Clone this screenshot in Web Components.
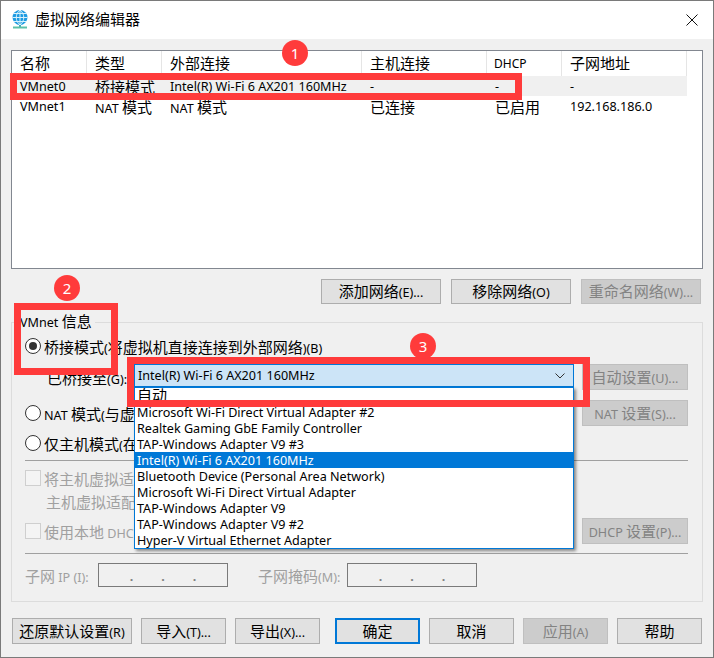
<!DOCTYPE html>
<html>
<head>
<meta charset="utf-8">
<style>
  html, body { margin: 0; padding: 0; background: #f0f0f0; }
  body { font: 12.6px "Noto Sans", "Noto Sans CJK SC", sans-serif; color: #000; }
</style>
</head>
<body>
<vm-dialog></vm-dialog>
<script>
// latin text is small and cjk text is big in this dialog, so the cjk runs get their own span
const mix = s => s.replace(/[\u3000-\u9fff]+/g, '<span class="z">$&</span>');
const textCss = `
  .z { font-family: "Noto Sans CJK SC", sans-serif; font-size: 15px; }
`;

class TitleBar extends HTMLElement {
  constructor() {
    super();
    this.attachShadow({ mode: "open" });
    this.shadowRoot.innerHTML = `
      <style>
        :host { display: flex; align-items: center; height: 38px; background: #fff; padding: 0 15px 0 10px; }
        svg { display: block; }
        .name { margin-left: 6px; padding-bottom: 4px; font: 15px "Noto Sans CJK SC", sans-serif; flex: 1; }
      </style>
      <svg width="18" height="20" viewBox="0 0 18 20">
        <path d="M9 14v3" stroke="#3fa9b8" stroke-width="2" fill="none"/>
        <path d="M2 17.500h14" stroke="#5cc0a8" stroke-width="2" fill="none"/>
        <circle cx="9" cy="7.500" r="7.500" fill="#1e9be2"/>
        <path d="M9 0v15M1.500 7.500h15M3 3.500h12M3 11.500h12M9 0c-5 4-5 11 0 15M9 0c5 4 5 11 0 15" stroke="#d8f1fb" stroke-width="1" fill="none"/>
      </svg>
      <span class="name"><slot></slot></span>
      <svg width="12" height="12" viewBox="0 0 12 12">
        <path d="M.5.500l11 11M11.500.500l-11 11" stroke="#111" stroke-width="1" fill="none"/>
      </svg>
    `;
  }
}

class NetTable extends HTMLElement {
  constructor() {
    super();
    this.attachShadow({ mode: "open" });
    const head = ["名称", "类型", "外部连接", "主机连接", "DHCP", "子网地址"];
    const rows = [
      ["VMnet0", "桥接模式", "Intel(R) Wi-Fi 6 AX201 160MHz", "-", "-", "-"],
      ["VMnet1", "NAT 模式", "NAT 模式", "已连接", "已启用", "192.168.186.0"],
    ];
    const cells = r => r.map(c => `<div class="c">${mix(c)}</div>`).join("");
    this.shadowRoot.innerHTML = `
      <style>
        ${textCss}
        :host { display: block; height: 219px; box-sizing: border-box; border: 1px solid #828790; background: #fff; }
        .r { display: grid; grid-template-columns: 75px 75px 200px 125px 75px 125px; width: 675px; height: 20px; align-items: center; }
        .c { padding-left: 8px; white-space: nowrap; overflow: hidden; }
        .h { height: 25px; }
        .h .c { height: 25px; line-height: 23px; box-sizing: border-box; border-right: 1px solid #e5e5e5; padding-left: 8px; }
        .h .c:nth-child(5) { font-size: 12px; line-height: 25px; padding-left: 7px; }
        .on { background: #f0f0f0; }
      </style>
      <div class="r h">${cells(head)}</div>
      <div class="r on">${cells(rows[0])}</div>
      <div class="r">${cells(rows[1])}</div>
    `;
  }
}

class WinButton extends HTMLElement {
  constructor() {
    super();
    this.attachShadow({ mode: "open" });
  }
  connectedCallback() {
    const label = this.textContent;
    this.shadowRoot.innerHTML = `
      <style>
        ${textCss}
        :host { display: flex; align-items: center; justify-content: center; box-sizing: border-box;
          height: 26px; padding-bottom: 2px; background: #e1e1e1; border: 1px solid #adadad; white-space: nowrap; flex: none; }
        :host([off]) { background: #cccccc; border-color: #bfbfbf; color: #838383; }
        :host([main]) { border: 2px solid #0078d7; }
      </style>
      <span>${mix(label)}</span>
    `;
  }
}

class RadioOpt extends HTMLElement {
  constructor() {
    super();
    this.attachShadow({ mode: "open" });
  }
  connectedCallback() {
    const label = this.textContent;
    this.shadowRoot.innerHTML = `
      <style>
        ${textCss}
        :host { display: flex; align-items: center; height: 20px; white-space: nowrap; }
        .o { width: 16px; height: 16px; box-sizing: border-box; border: 1px solid #333; border-radius: 50%; background: #fff;
          display: flex; align-items: center; justify-content: center; margin-right: 3px; flex: none; }
        :host([on]) .o::after { content: ""; width: 8px; height: 8px; border-radius: 50%; background: #333; }
      </style>
      <span class="o"></span><span>${mix(label)}</span>
    `;
  }
}

class CheckOpt extends HTMLElement {
  constructor() {
    super();
    this.attachShadow({ mode: "open" });
  }
  connectedCallback() {
    const label = this.textContent;
    this.shadowRoot.innerHTML = `
      <style>
        ${textCss}
        :host { display: flex; align-items: center; height: 20px; white-space: nowrap; color: #a0a0a0; }
        .o { width: 16px; height: 16px; box-sizing: border-box; border: 1px solid #cfcfcf; background: #f4f4f4; margin-right: 3px; flex: none; }
      </style>
      <span class="o"></span><span>${mix(label)}</span>
    `;
  }
}

class IpField extends HTMLElement {
  constructor() {
    super();
    this.attachShadow({ mode: "open" });
    this.shadowRoot.innerHTML = `
      <style>
        :host { display: flex; justify-content: center; gap: 28px; width: 130px; height: 24px; box-sizing: border-box;
          border: 1px solid #7a7a7a; line-height: 26px; color: #808080; flex: none; font-weight: bold; }
      </style>
      <span>.</span><span>.</span><span>.</span>
    `;
  }
}

class ComboList extends HTMLElement {
  constructor() {
    super();
    this.attachShadow({ mode: "open" });
    const items = [
      "自动",
      "Microsoft Wi-Fi Direct Virtual Adapter #2",
      "Realtek Gaming GbE Family Controller",
      "TAP-Windows Adapter V9 #3",
      "Intel(R) Wi-Fi 6 AX201 160MHz",
      "Bluetooth Device (Personal Area Network)",
      "Microsoft Wi-Fi Direct Virtual Adapter",
      "TAP-Windows Adapter V9",
      "TAP-Windows Adapter V9 #2",
      "Hyper-V Virtual Ethernet Adapter",
    ];
    this.shadowRoot.innerHTML = `
      <style>
        ${textCss}
        :host { display: block; position: relative; width: 440px; height: 23px; flex: none; z-index: 2; align-self: flex-start; }
        .box { display: flex; align-items: center; justify-content: space-between; height: 23px; box-sizing: border-box;
          background: #cce4f7; border: 1px solid #0078d7; padding: 0 8px 0 3px; }
        .drop { position: absolute; left: 0; top: 23px; width: 440px; box-sizing: border-box; border: 1px solid #0078d7;
          background: #fff; box-shadow: 2px 2px 3px rgba(0,0,0,.45); }
        .i { height: 16px; line-height: 18px; padding-left: 2px; white-space: nowrap; }
        .i .z { line-height: 14px; }
        .sel { background: #0078d7; color: #fff; }
      </style>
      <div class="box">
        <span>Intel(R) Wi-Fi 6 AX201 160MHz</span>
        <svg width="10" height="6" viewBox="0 0 10 6"><path d="M.5.500L5 5 9.500.500" stroke="#333" fill="none"/></svg>
      </div>
      <div class="drop">
        ${items.map((t, i) => `<div class="i${i == 4 ? " sel" : ""}">${mix(t)}</div>`).join("")}
      </div>
    `;
  }
}

class InfoGroup extends HTMLElement {
  constructor() {
    super();
    this.attachShadow({ mode: "open" });
    this.shadowRoot.innerHTML = `
      <style>
        ${textCss}
        :host { display: block; position: relative; box-sizing: border-box; height: 280px; border: 1px solid #dcdcdc; padding: 13px 14px 0 13px; }
        .legend { position: absolute; left: 8px; top: -12px; background: #f0f0f0; padding-right: 3px; height: 20px; line-height: 20px; white-space: nowrap; }
        .row { display: flex; align-items: center; white-space: nowrap; }
        .end { margin-left: auto; }
        .sep { height: 1px; background: #a0a0a0; }
        .off { color: #a0a0a0; }
        win-button { width: 106px; }
        .r1 { margin-top: 8px; height: 26px; padding-left: 22px; }
        .r1 .lab { width: 87px; }
        .r2 { margin-top: 10px; height: 26px; }
        .m7 { margin-top: 7px; }
        .r3 { margin-top: 3px; height: 20px; padding-left: 21px; }
        .r4 { margin-top: 7px; height: 26px; }
        .r5 { margin-top: 9px; height: 24px; }
        .r5 .a { width: 73px; box-sizing: border-box; }
        .r5 .b { width: 89px; padding-left: 30px; box-sizing: content-box; }
      </style>
      <div class="legend">${mix("VMnet 信息")}</div>
      <radio-opt on>桥接模式(将虚拟机直接连接到外部网络)(B)</radio-opt>
      <div class="row r1">
        <span class="lab">${mix("已桥接至(G):")}</span>
        <combo-list></combo-list>
        <win-button class="end" off>自动设置(U)...</win-button>
      </div>
      <div class="row r2">
        <radio-opt>NAT 模式(与虚拟机共享主机的 IP 地址)(N)</radio-opt>
        <win-button class="end" off>NAT 设置(S)...</win-button>
      </div>
      <radio-opt class="m7">仅主机模式(在专用网络内连接虚拟机)(H)</radio-opt>
      <div class="sep m7"></div>
      <check-opt class="m7">将主机虚拟适配器连接到此网络(V)</check-opt>
      <div class="row r3 off">${mix("主机虚拟适配器名称: VMware 网络适配器 VMnet0")}</div>
      <div class="row r4">
        <check-opt>使用本地 DHCP 服务将 IP 地址分配给虚拟机(D)</check-opt>
        <win-button class="end" off>DHCP 设置(P)...</win-button>
      </div>
      <div class="sep" style="margin-top:9px"></div>
      <div class="row r5 off">
        <span class="a">${mix("子网 IP (I):")}</span>
        <ip-field></ip-field>
        <span class="b">${mix("子网掩码(M):")}</span>
        <ip-field></ip-field>
      </div>
    `;
  }
}

class MarkBox extends HTMLElement {
  constructor() {
    super();
    this.attachShadow({ mode: "open" });
    this.shadowRoot.innerHTML = `
      <style>
        :host { display: block; position: absolute; box-sizing: border-box; border: 7px solid #ff3b3b; z-index: 5; }
      </style>
    `;
  }
}

class MarkBadge extends HTMLElement {
  constructor() {
    super();
    this.attachShadow({ mode: "open" });
    this.shadowRoot.innerHTML = `
      <style>
        :host { display: flex; align-items: center; justify-content: center; position: absolute; width: 26px; height: 26px;
          border-radius: 50%; background: #ff3b3b; color: #fff; font: 15px "Noto Sans", sans-serif; z-index: 5; }
      </style>
      <slot></slot>
    `;
  }
}

class VmDialog extends HTMLElement {
  constructor() {
    super();
    this.attachShadow({ mode: "open" });
    this.shadowRoot.innerHTML = `
      <style>
        :host { display: block; position: relative; width: 714px; height: 658px; box-sizing: border-box;
          border: 1px solid #7a7a7a; background: #f0f0f0; overflow: hidden; }
        .main { padding: 11px 10px 0 10px; }
        .actions { display: flex; justify-content: flex-end; gap: 10px; margin: 10px 2px 0 0; }
        .actions win-button { width: 120px; height: 25px; }
        info-group { margin-top: 18px; }
        .foot { display: flex; margin: 16px 1px 0 1px; }
        .foot win-button { width: 85px; margin-left: 9px; }
        .foot win-button:first-child { width: 120px; margin-left: 0; }
        .foot win-button[main] { margin-left: 15px; }
      </style>
      <title-bar>虚拟网络编辑器</title-bar>
      <div class="main">
        <net-table></net-table>
        <div class="actions">
          <win-button>添加网络(E)...</win-button>
          <win-button>移除网络(O)</win-button>
          <win-button off>重命名网络(W)...</win-button>
        </div>
        <info-group></info-group>
        <div class="foot">
          <win-button>还原默认设置(R)</win-button>
          <win-button>导入(T)...</win-button>
          <win-button>导出(X)...</win-button>
          <win-button main>确定</win-button>
          <win-button>取消</win-button>
          <win-button off>应用(A)</win-button>
          <win-button>帮助</win-button>
        </div>
      </div>
      <mark-box style="left:9px;top:72px;width:512px;height:27px"></mark-box>
      <mark-box style="left:13px;top:302px;width:104px;height:72px"></mark-box>
      <mark-box style="left:126px;top:356px;width:463px;height:50px"></mark-box>
      <mark-badge style="left:281px;top:39px">1</mark-badge>
      <mark-badge style="left:53px;top:274px">2</mark-badge>
      <mark-badge style="left:409px;top:332px">3</mark-badge>
    `;
  }
}

customElements.define("title-bar", TitleBar);
customElements.define("net-table", NetTable);
customElements.define("win-button", WinButton);
customElements.define("radio-opt", RadioOpt);
customElements.define("check-opt", CheckOpt);
customElements.define("ip-field", IpField);
customElements.define("combo-list", ComboList);
customElements.define("info-group", InfoGroup);
customElements.define("mark-box", MarkBox);
customElements.define("mark-badge", MarkBadge);
customElements.define("vm-dialog", VmDialog);
</script>
</body>
</html>
